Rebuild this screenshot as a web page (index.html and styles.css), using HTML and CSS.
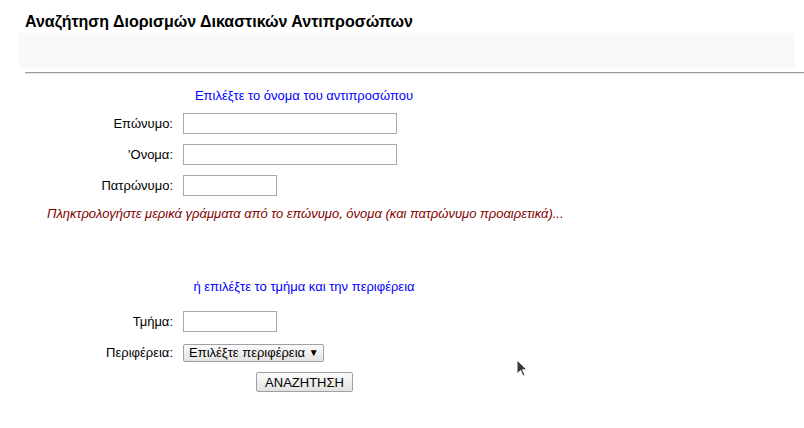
FILE: index.html
```html
<!DOCTYPE html>
<html lang="el">
<head>
<meta charset="utf-8">
<title>Αναζήτηση Διορισμών Δικαστικών Αντιπροσώπων</title>
<link rel="stylesheet" href="styles.css">
</head>
<body>
<h1 class="title">Αναζήτηση Διορισμών Δικαστικών Αντιπροσώπων</h1>
<div class="band"></div>
<div class="rule"></div>
<form class="form">
  <div class="hint hint-first">Επιλέξτε το όνομα του αντιπροσώπου</div>
  <div class="row row-first"><label class="lbl">Επώνυμο:</label><input class="field wide" type="text"></div>
  <div class="row"><label class="lbl">'Ονομα:</label><input class="field wide" type="text"></div>
  <div class="row"><label class="lbl">Πατρώνυμο:</label><input class="field narrow" type="text"></div>
  <div class="note">Πληκτρολογήστε μερικά γράμματα από το επώνυμο, όνομα (και πατρώνυμο προαιρετικά)...</div>
  <div class="hint hint-second">ή επιλέξτε το τμήμα και την περιφέρεια</div>
  <div class="row row-dept"><label class="lbl">Τμήμα:</label><input class="field narrow" type="text"></div>
  <div class="row row-sel"><label class="lbl">Περιφέρεια:</label><div class="select">Επιλέξτε περιφέρεια <span class="arrow">▼</span></div></div>
  <div class="btn-wrap"><button class="btn" type="button">ΑΝΑΖΗΤΗΣΗ</button></div>
</form>
<svg class="cursor" width="12" height="20" viewBox="0 0 12 20"><path d="M1 1 L1 15 L4.5 11.5 L7 17 L9 16 L6.5 10.8 L11 10.8 Z" fill="#3a3a3a" stroke="#ffffff" stroke-width="1"/></svg>
</body>
</html>
```
FILE: styles.css
```css
html, body {
  margin: 0;
  padding: 0;
  background: #ffffff;
}
body {
  font-family: "Liberation Sans", Arial, sans-serif;
  font-size: 13px;
  color: #000;
  position: relative;
  width: 804px;
  height: 428px;
  overflow: hidden;
}
.title {
  margin: 0;
  padding: 13px 0 0 25px;
  font-size: 16px;
  line-height: 18px;
  font-weight: bold;
}
.band {
  margin: 2px 0 0 18px;
  width: 777px;
  height: 35px;
  background: #f8f9fb;
}
.rule {
  margin: 4px 0 0 25px;
  border-top: 1px solid #9a9a9a;
  border-bottom: 1px solid #e8e8e8;
}
.form {
  margin: 0;
  display: flex;
  flex-direction: column;
}
.hint {
  margin-left: 183px;
  width: 242px;
  text-align: center;
  color: #0000ff;
  line-height: 16px;
}
.hint-first { margin-top: 14px; }
.hint-second { margin-top: 57px; }
.row {
  display: flex;
  align-items: center;
  height: 21px;
  margin-top: 10px;
}
.row-first { margin-top: 9px; }
.row-dept { margin-top: 16px; }
.row-sel { margin-top: 10px; }
.lbl {
  width: 183px;
  padding-right: 10px;
  box-sizing: border-box;
  text-align: right;
}
.field {
  box-sizing: border-box;
  height: 21px;
  border: 1px solid #a9a9a9;
  background: #fff;
  margin: 0;
  padding: 1px 2px;
}
.wide { width: 214px; }
.narrow { width: 94px; }
.note {
  margin: 10px 0 0 47px;
  color: #800000;
  font-style: italic;
  line-height: 16px;
}
.select {
  box-sizing: border-box;
  width: 141px;
  height: 18px;
  border: 1px solid #a0a0a0;
  border-radius: 2px;
  background: linear-gradient(#fbfbfb, #e4e4e4);
  line-height: 16px;
  padding-left: 5px;
  white-space: nowrap;
}
.arrow {
  font-size: 10px;
  vertical-align: 1px;
}
.btn-wrap {
  margin: 9px 0 0 183px;
  width: 243px;
  display: flex;
  justify-content: center;
}
.btn {
  box-sizing: border-box;
  width: 97px;
  height: 20px;
  font-family: "Liberation Sans", Arial, sans-serif;
  font-size: 13px;
  border: 1px solid #a0a0a0;
  border-radius: 2px;
  background: linear-gradient(#fbfbfb, #e2e2e2);
  padding: 0;
  color: #000;
}
.cursor {
  position: absolute;
  left: 516px;
  top: 359px;
}
```
